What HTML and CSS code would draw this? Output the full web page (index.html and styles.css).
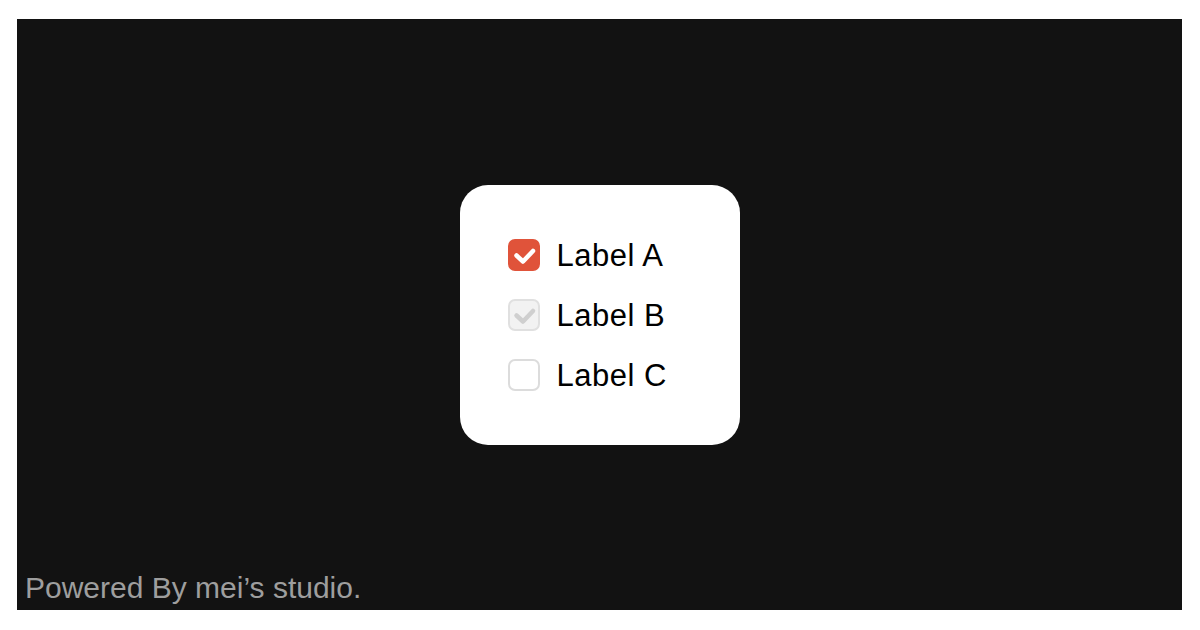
FILE: index.html
```html
<!DOCTYPE html>
<html lang="en">
<head>
  <meta charset="UTF-8" />
  <meta name="viewport" content="width=device-width, initial-scale=1.0"/>
  <title>Checkbox</title>
  <link rel="stylesheet" href="styles.css">
</head>
<body>

<div class="stage">
  <!-- checkbox card -->
  <div class="card">
    <label class="row">
      <span class="box checked">
        <svg viewBox="0 0 32 32" width="32" height="32"><path d="M8.5 16.5l6.5 6 10-10.5" /></svg>
      </span>
      <span class="text">Label A</span>
    </label>
    <label class="row">
      <span class="box disabled">
        <svg viewBox="0 0 32 32" width="32" height="32"><path d="M8.5 16.5l6.5 6 10-10.5" /></svg>
      </span>
      <span class="text">Label B</span>
    </label>
    <label class="row">
      <span class="box"></span>
      <span class="text">Label C</span>
    </label>
  </div>

  <div class="footer">Powered By mei’s studio.</div>
</div>

</body>
</html>
```

FILE: styles.css
```css
* {
  margin: 0;
  padding: 0;
  box-sizing: border-box;
}
html, body {
  height: 100%;
  background: #fff;
  font-family: 'Liberation Sans', Arial, sans-serif;
}
body {
  padding: 19px 18px 20px 17px;
}

.stage {
  height: 100%;
  background: #121212;
  display: grid;
}

.card {
  grid-area: 1 / 1;
  place-self: center;
  width: 280px;
  height: 260px;
  padding: 40px 48px;
  background: #fff;
  border-radius: 28px;
}

.row {
  display: flex;
  align-items: center;
  gap: 17px;
  height: 60px;
  cursor: pointer;
}

.box {
  width: 32px;
  height: 32px;
  flex: none;
  border: 2px solid #dcdcdc;
  border-radius: 7px;
  background: #fff;
  display: flex;
  align-items: center;
  justify-content: center;
}
.box svg {
  margin: -2px;
}
.box path {
  fill: none;
  stroke-width: 4.5;
  stroke-linecap: round;
  stroke-linejoin: round;
}
.box.checked {
  background: #e0533a;
  border-color: #e0533a;
}
.box.checked path {
  stroke: #fff;
}
.box.disabled {
  background: #f2f2f2;
  border-color: #e0e0e0;
}
.box.disabled path {
  stroke: #cfcfcf;
}

.text {
  font-size: 31px;
  letter-spacing: 0.5px;
  color: #000;
  padding-top: 2px;
}

.footer {
  grid-area: 1 / 1;
  align-self: end;
  padding: 0 8px 5px;
  font-size: 30px;
  color: #9e9e9e;
}
```
